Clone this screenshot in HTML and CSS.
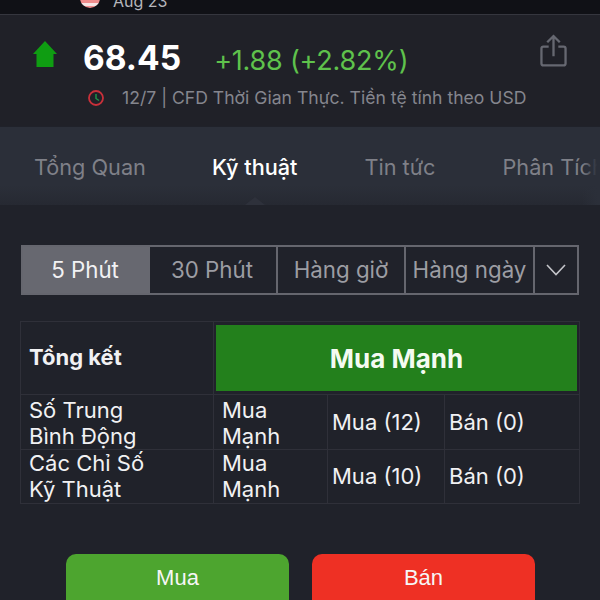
FILE: index.html
```html
<!DOCTYPE html>
<html lang="vi">
  <head>
    <meta charset="UTF-8" />
    <title>Kỹ thuật</title>
    <link rel="stylesheet" href="styles.css">
  </head>
  <body>
    <div class="screen">
      <div class="topbar">
        <span class="flag"></span>
        <span class="topbar-text">Aug 23</span>
      </div>

      <div class="quote">
        <div class="quote-main">
          <svg class="arrow" viewBox="0 0 24 26" width="24" height="26">
            <path d="M12 0 L24 13 H20.5 V26 H3.5 V13 H0 Z" fill="#0f9d12" />
          </svg>
          <span class="price">68.45</span>
          <span class="change">+1.88 (+2.82%)</span>
          <svg class="share" viewBox="0 0 28 34" width="27" height="33" fill="none" stroke="#666871" stroke-width="2.4">
            <path d="M9 13 H3.5 Q1.5 13 1.5 15 V30.5 Q1.5 32.5 3.5 32.5 H24.5 Q26.5 32.5 26.5 30.5 V15 Q26.5 13 24.5 13 H19" />
            <path d="M14 23 V2 M7.5 8.5 L14 2 L20.5 8.5" />
          </svg>
        </div>
        <div class="quote-sub">
          <svg class="clock" viewBox="0 0 18 18" width="18" height="18" fill="none">
            <circle cx="9" cy="9" r="7" stroke="#c9303a" stroke-width="1.8" />
            <path d="M9 5 V9.5 L12 11.5" stroke="#1f9a4a" stroke-width="1.4" />
          </svg>
          <span>12/7 | CFD Thời Gian Thực. Tiền tệ tính theo USD</span>
        </div>
      </div>

      <div class="tabs">
        <span class="tab tab-first">Tổng Quan</span>
        <span class="tab tab-active">Kỹ thuật</span>
        <span class="tab tab-news">Tin tức</span>
        <span class="tab tab-last">Phân Tích</span>
        <span class="tabs-fade"></span>
      </div>

      <div class="content">
        <div class="periods">
          <div class="period period-on">5 Phút</div>
          <div class="period period-30">30 Phút</div>
          <div class="period period-hour">Hàng giờ</div>
          <div class="period period-day">Hàng ngày</div>
          <div class="period period-more">
            <svg viewBox="0 0 20 12" width="20" height="12" fill="none" stroke="#c4c5ca" stroke-width="1.6">
              <path d="M1 1 L10 10.5 L19 1" />
            </svg>
          </div>
        </div>

        <table class="summary">
          <colgroup>
            <col class="col-name" />
            <col class="col-signal" />
            <col class="col-buy" />
            <col class="col-sell" />
          </colgroup>
          <tr class="row-head">
            <th>Tổng kết</th>
            <td colspan="3" class="verdict-cell"><div class="verdict">Mua Mạnh</div></td>
          </tr>
          <tr class="row-one">
            <td class="stack">Số Trung<br />Bình Động</td>
            <td class="stack">Mua<br />Mạnh</td>
            <td class="count">Mua (12)</td>
            <td class="count">Bán (0)</td>
          </tr>
          <tr class="row-two">
            <td class="stack">Các Chỉ Số<br />Kỹ Thuật</td>
            <td class="stack">Mua<br />Mạnh</td>
            <td class="count">Mua (10)</td>
            <td class="count">Bán (0)</td>
          </tr>
        </table>

        <div class="actions">
          <button class="btn btn-buy">Mua</button>
          <button class="btn btn-sell">Bán</button>
        </div>
      </div>
    </div>
  </body>
</html>
```

FILE: styles.css
```css
html,
body {
  margin: 0;
  padding: 0;
}
body {
  font-family: Inter, "Liberation Sans", sans-serif;
  background: #20222a;
}
.screen {
  width: 600px;
  height: 600px;
  overflow: hidden;
  background: #20222a;
}
.topbar {
  height: 14px;
  background: #101116;
  border-bottom: 1px solid #35363e;
  display: flex;
  align-items: flex-start;
  padding-left: 80px;
  overflow: hidden;
}
.flag {
  flex: none;
  width: 20px;
  height: 20px;
  margin-top: -12px;
  border-radius: 50%;
  background: repeating-linear-gradient(#f08d8d 0 3px, #f7e4e4 3px 6px);
}
.topbar-text {
  flex: none;
  margin-left: 13px;
  margin-top: -7px;
  font-size: 16px;
  line-height: 16px;
  color: #b6b7bc;
}
.quote {
  height: 111px;
  background: #202128;
  box-sizing: border-box;
  padding-top: 20px;
}
.quote-main {
  display: flex;
  align-items: center;
  height: 46px;
  padding-left: 33px;
}
.arrow {
  flex: none;
  margin-top: -8px;
}
.price {
  margin-left: 26px;
  font-size: 33.5px;
  font-weight: 700;
  color: #fff;
}
.change {
  margin-left: 33px;
  margin-top: 4px;
  font-size: 27px;
  letter-spacing: -0.2px;
  color: #5fc24c;
}
.share {
  flex: none;
  margin-left: auto;
  margin-right: 33px;
  margin-top: -16px;
}
.quote-sub {
  display: flex;
  align-items: center;
  padding-left: 87px;
  margin-top: 6px;
  font-size: 17.6px;
  color: #85868e;
}
.clock {
  flex: none;
  margin-right: 17px;
}
.tabs {
  position: relative;
  height: 78px;
  margin-top: 1px;
  background: linear-gradient(#2b2f39, #2b2f39 75%, #262932);
  display: flex;
  align-items: center;
  padding-left: 34px;
  overflow: hidden;
  font-size: 21.7px;
  color: #7f8088;
  white-space: nowrap;
}
.tab {
  flex: none;
  padding-top: 2px;
}
.tab-active {
  position: relative;
  margin-left: 66px;
  color: #fff;
  font-weight: 500;
}
.tab-active::after {
  content: "";
  position: absolute;
  left: 50%;
  bottom: -25px;
  margin-left: -10px;
  border-left: 10px solid transparent;
  border-right: 10px solid transparent;
  border-bottom: 8px solid #2e313b;
}
.tab-news {
  margin-left: 67px;
}
.tab-last {
  margin-left: 67px;
}
.tabs-fade {
  position: absolute;
  top: 0;
  bottom: 0;
  right: 0;
  width: 18px;
  background: linear-gradient(90deg, rgba(43, 47, 57, 0), #2b2f39 85%);
}
.content {
  padding: 40px 20px 0 21px;
}
.periods {
  display: flex;
  height: 50px;
  width: 558px;
  box-sizing: border-box;
  border: 2px solid #65666e;
  font-size: 22.3px;
  color: #9c9da3;
}
.period {
  display: flex;
  align-items: center;
  justify-content: center;
  box-sizing: border-box;
  border-right: 2px solid #65666e;
  padding-bottom: 2px;
}
.period-on {
  width: 127px;
  border-right: 0;
  padding-right: 3px;
  background: #676870;
  color: #f2f2f4;
}
.period-30 {
  width: 128px;
  padding-right: 2px;
}
.period-hour {
  width: 128px;
}
.period-day {
  width: 129px;
}
.period-more {
  flex: 1;
  border-right: 0;
  padding-bottom: 0;
}
.summary {
  margin: 26px 0 0 -1px;
  width: 560px;
  border-collapse: collapse;
  table-layout: fixed;
  color: #f1f1f3;
  font-size: 22px;
  line-height: 27px;
}
.col-name {
  width: 193px;
}
.col-signal {
  width: 114px;
}
.col-buy {
  width: 117px;
}
.summary th,
.summary td {
  border: 1px solid #2f3039;
  padding: 0 8px;
  text-align: left;
  font-weight: 400;
}
.summary th {
  font-weight: 700;
  padding-bottom: 2px;
}
.summary .count {
  padding: 0 4px;
}
.summary .stack {
  line-height: 26px;
}
.row-one .stack {
  padding-top: 2px;
}
.row-two .stack {
  padding-bottom: 1px;
}
.row-head {
  height: 73px;
}
.summary .verdict-cell {
  padding: 3px 2px;
}
.verdict {
  height: 66px;
  background: #23801c;
  display: flex;
  align-items: center;
  justify-content: center;
  color: #f4fbf1;
  font-weight: 700;
  font-size: 26px;
}
.row-one {
  height: 55px;
}
.row-two {
  height: 54px;
}
.actions {
  display: flex;
  gap: 23px;
  margin: 50px 0 0 45px;
}
.btn {
  width: 223px;
  height: 60px;
  border: none;
  border-radius: 10px;
  padding: 0 0 12px;
  color: #f6f6f6;
  font-family: "Liberation Sans", sans-serif;
  font-size: 22px;
}
.btn-buy {
  background: #4da52f;
}
.btn-sell {
  background: #ee3024;
}
```
